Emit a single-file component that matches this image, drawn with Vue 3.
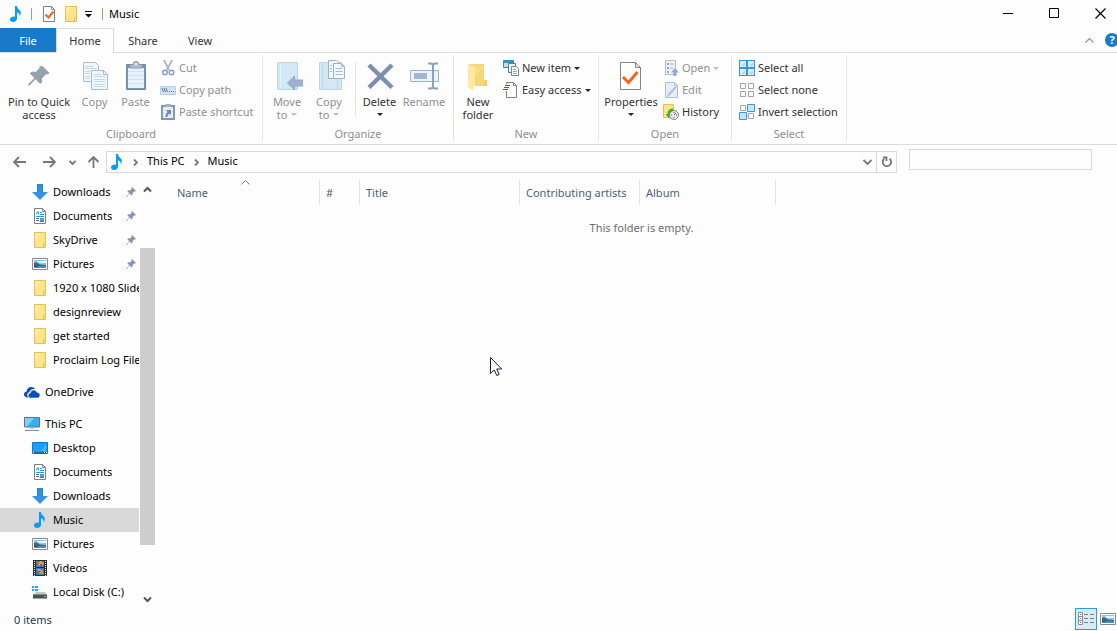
<script setup>
import { ref } from 'vue'

const tabs = ['Home', 'Share', 'View']
const activeTab = ref('Home')
const search = ref('')
const selected = ref('pc-Music')
const view = ref('details')

const groups = [
  {
    name: 'Clipboard',
    kind: 'clipboard',
    large: [
      { lines: ['Pin to Quick', 'access'], icon: 'pin-large', size: 'w70' },
      { lines: ['Copy'], icon: 'copy', size: 'w41', off: true },
      { lines: ['Paste'], icon: 'paste', size: 'w41', off: true },
    ],
    small: [
      { label: 'Cut', icon: 'cut', off: true },
      { label: 'Copy path', icon: 'copy-path', off: true },
      { label: 'Paste shortcut', icon: 'paste-shortcut', off: true },
    ],
  },
  {
    name: 'Organize',
    kind: 'organize',
    large: [
      { lines: ['Move', 'to'], icon: 'move', size: 'w42', off: true, menu: true },
      { lines: ['Copy', 'to'], icon: 'copy-to', size: 'w42', off: true, menu: true },
      { lines: ['Delete', ''], icon: 'delete', size: 'w41', menu: true, divided: true },
      { lines: ['Rename'], icon: 'rename', size: 'w48', off: true },
    ],
    small: [],
  },
  {
    name: 'New',
    kind: 'new',
    large: [{ lines: ['New', 'folder'], icon: 'new-folder', size: 'w44' }],
    small: [
      { label: 'New item', icon: 'new-item', menu: true },
      { label: 'Easy access', icon: 'easy-access', menu: true },
    ],
  },
  {
    name: 'Open',
    kind: 'open',
    large: [{ lines: ['Properties', ''], icon: 'properties', size: 'w56', menu: true }],
    small: [
      { label: 'Open', icon: 'open', off: true, menu: true },
      { label: 'Edit', icon: 'edit', off: true },
      { label: 'History', icon: 'history' },
    ],
  },
  {
    name: 'Select',
    kind: 'select',
    large: [],
    small: [
      { label: 'Select all', icon: 'select-all' },
      { label: 'Select none', icon: 'select-none' },
      { label: 'Invert selection', icon: 'invert' },
    ],
  },
]

const tree = [
  [
    { id: 'q-Downloads', label: 'Downloads', icon: 'downloads', pinned: true },
    { id: 'q-Documents', label: 'Documents', icon: 'documents', pinned: true },
    { id: 'q-SkyDrive', label: 'SkyDrive', icon: 'folder', pinned: true },
    { id: 'q-Pictures', label: 'Pictures', icon: 'pictures', pinned: true },
    { id: 'q-Slides', label: '1920 x 1080 Slides', icon: 'folder' },
    { id: 'q-design', label: 'designreview', icon: 'folder' },
    { id: 'q-get', label: 'get started', icon: 'folder' },
    { id: 'q-log', label: 'Proclaim Log Files', icon: 'folder' },
  ],
  [{ id: 'onedrive', label: 'OneDrive', icon: 'onedrive', root: true }],
  [
    { id: 'pc', label: 'This PC', icon: 'pc', root: true },
    { id: 'pc-Desktop', label: 'Desktop', icon: 'desktop' },
    { id: 'pc-Documents', label: 'Documents', icon: 'documents' },
    { id: 'pc-Downloads', label: 'Downloads', icon: 'downloads' },
    { id: 'pc-Music', label: 'Music', icon: 'music' },
    { id: 'pc-Pictures', label: 'Pictures', icon: 'pictures' },
    { id: 'pc-Videos', label: 'Videos', icon: 'videos' },
    { id: 'pc-C', label: 'Local Disk (C:)', icon: 'disk' },
  ],
]

const columns = [
  { label: 'Name', cls: 'c-name' },
  { label: '#', cls: 'c-num' },
  { label: 'Title', cls: 'c-title' },
  { label: 'Contributing artists', cls: 'c-artists' },
  { label: 'Album', cls: 'c-album' },
]
</script>

<template>
  <div class="window">
    <svg class="defs" aria-hidden="true">
      <symbol id="music" viewBox="0 0 16 16">
        <path d="M7 0h2c.2 2.200 1.200 3 2.600 4.200C13.300 5.700 13.200 8 11.700 10.500c.3-2.200-.5-3.600-2.700-4.300V12.500C9 14.500 7.300 16 5.200 16 3.500 16 2 15.200 2 13.500 2 11.700 3.800 10.500 5.600 10.500c.5 0 1 .1 1.400.3z" fill="#0a9bf5" />
      </symbol>
      <symbol id="folder" viewBox="0 0 16 16">
        <path d="M2.500.5h11v15h-11z" fill="#ffe48c" stroke="#e9c04a" />
        <path d="M3 1h6L3 9z" fill="#fff0b4" opacity=".7" />
        <path d="M11.500 15.500v-4l1-1h1v5z" fill="#ffe48c" stroke="#e9c04a" />
      </symbol>
      <symbol id="check-page" viewBox="0 0 16 16">
        <path d="M2.500.5h8l3 3v12h-11z" fill="#fff" stroke="#808080" />
        <path d="M10.500.5v3h3" fill="none" stroke="#909090" />
        <path d="M4.500 8.500l3 3 5-6" fill="none" stroke="#f4641e" stroke-width="2" />
      </symbol>
      <symbol id="documents" viewBox="0 0 16 16">
        <path d="M2.500.5h8l3 3v12h-11z" fill="#fff" stroke="#808080" />
        <path d="M10.500.5v3h3" fill="none" stroke="#808080" />
        <path d="M4 6.500l2-3 1 3M8 4.500h2M8 6.500h4M4 8.500h8" fill="none" stroke="#3292d4" />
        <path d="M4 10.500h3M4 12.500h3M8 13.500h4" stroke="#707070" />
        <path d="M8 10h4v3H8z" fill="#5a9cc8" />
      </symbol>
      <symbol id="downloads" viewBox="0 0 16 16">
        <path d="M5 0h6v8h5l-8 8-8-8h5z" fill="#3592e4" />
        <path d="M5.500 8V.5h5V8" fill="none" stroke="#2b80cd" />
      </symbol>
      <symbol id="pictures" viewBox="0 0 16 16">
        <path d="M.5 2.500h15v11H.5z" fill="#fff" stroke="#8a8a8a" />
        <path d="M2 4h12v8H2z" fill="#8fc4f0" />
        <path d="M5 5h9v2H7z" fill="#e7f6ff" />
        <path d="M2 7c2-1 4 0 6 1.500l6 .5v1H2z" fill="#3a6a6c" />
        <path d="M2 10h12v2H2z" fill="#4b8cc4" />
        <path d="M2 10h5l-3 1H2z" fill="#2c5a66" />
      </symbol>
      <symbol id="onedrive" viewBox="0 0 16 16">
        <path d="M5 13.500C1 13.500 0 12 0 10.300c0-1.700 1.100-2.700 2.600-2.900C3 4.300 5 3 7.200 3c1.800 0 3 .8 3.900 2.200-3-.7-5.200 1-5.800 3C2.700 8.500 2.700 12 5 13.500z" fill="#0d4db5" />
        <path d="M6.500 14C3.700 14 3.200 9.500 6.300 9c.3-2 1.800-3.100 3.300-3 1.600 0 2.700 1 3.300 2.300 2 0 3.100 1.300 3.100 2.900S14.900 14 13.300 14z" fill="#0d4db5" stroke="#fff" stroke-width=".6" />
      </symbol>
      <symbol id="pc" viewBox="0 0 16 16">
        <path d="M.5 1.500h15v9.500H.5z" fill="#37adf2" stroke="#55758e" />
        <path d="M1 2h9L3 10.500H1z" fill="#7ed0fb" />
        <path d="M6 12h4v1H6z" fill="#b6c5d0" />
        <path d="M1 14h14v1H1z" fill="#76909f" />
      </symbol>
      <symbol id="desktop" viewBox="0 0 16 16">
        <path d="M.5 2.500h15v11H.5z" fill="#18a0fb" stroke="#1577c2" />
        <path d="M1 12h14v1.500H1z" fill="#14619e" />
        <path d="M1 12h1v1H1zM12 12h1v1h-1zM14 12h1v1h-1z" fill="#fff" />
        <path d="M9 11L14 4v7z" fill="#46b5ff" />
      </symbol>
      <symbol id="videos" viewBox="0 0 16 16">
        <path d="M1 0h14v16H1z" fill="#2b2b2b" />
        <path d="M2.500 1v15M13.500 1v15" stroke="#f4f4f4" stroke-dasharray="1 1" />
        <path d="M4 1h8v6H4z" fill="#3f78c8" />
        <path d="M4 8h8v7H4z" fill="#3f78c8" />
        <path d="M6 4l2-3 3 1 1 2-2 2H7z" fill="#e8a03a" />
        <path d="M5 9h3l3 2v3H8z" fill="#e8a03a" />
        <path d="M4 1h2v2H4zM9 13h3v2H9z" fill="#5f9b4c" />
        <path d="M8 4h2v2H8zM6 11h3v1H6z" fill="#c24a35" />
      </symbol>
      <symbol id="disk" viewBox="0 0 16 16">
        <path d="M0 2h2v2H0zM3 2h3v2H3zM0 5h2v2H0zM3 5h3v2H3z" fill="#0eb5e8" />
        <path d="M4 8h9l2 3H1z" fill="#c3c7c9" />
        <path d="M1 10.500h14v4H1z" fill="#4c5357" />
        <path d="M12 12h2v1h-2z" fill="#48e06f" />
      </symbol>
      <symbol id="pin" viewBox="0 0 10 10">
        <path d="M6 0l4 4-1 .6-.8-.2L6.500 6.100l.2 1.500-1 1-2-2L.5 10H0v-.5l3.300-3.200-2-2 1-1 1.600.2 1.700-1.700L5.400.9z" fill="#8595a6" />
      </symbol>
      <symbol id="pin-large" viewBox="0 0 32 32">
        <path d="M19.500 6l7 7-2 1.500-1.500-.3-4.200 4.200.5 3.600-2 2-4.800-4.800L6.500 25.500H5.200v-1.300l6.200-6.200-4.500-4.500 2-2 3.700.5 4-4-.3-1.500z" fill="#93a2ac" />
      </symbol>
      <symbol id="copy" viewBox="0 0 32 32">
        <g fill="#f1f7fd" stroke="#a9bbd3">
          <path d="M4.500 2.500h12l3 3v16h-15z" />
          <path d="M12.500 10.500h12l4 4v15h-16z" />
          <path d="M24.500 10.500v4h4" fill="none" />
        </g>
        <path d="M6 6.500h9M6 8.500h11M6 11.500h5M6 13.500h5M6 16.500h5M6 18.500h5M15 14.500h7M15 16.500h11M15 19.500h11M15 21.500h11M15 24.500h11M15 26.500h11" stroke="#c6d7e8" />
      </symbol>
      <symbol id="paste" viewBox="0 0 32 32">
        <path d="M6.500 4.500h19v25h-19z" fill="#7c93b6" stroke="#7188ad" />
        <path d="M8 8h16v20H8z" fill="#e7f3fc" />
        <path d="M8 11.500h16M8 15.500h16M8 19.500h16M8 23.500h16" stroke="#d1e2f0" />
        <path d="M10 8V4.500h3c0-4 6-4 6 0h3V8z" fill="#b5bec9" stroke="#8997aa" />
        <circle cx="16" cy="4" r="1" fill="#fff" />
      </symbol>
      <symbol id="cut" viewBox="0 0 16 16">
        <path d="M4 0l5 10M12 0L7 10" stroke="#a7b7ca" stroke-width="1.800" fill="none" />
        <circle cx="5" cy="12.500" r="2.300" fill="none" stroke="#899fbd" stroke-width="1.500" />
        <circle cx="11.500" cy="12.500" r="2.300" fill="none" stroke="#899fbd" stroke-width="1.500" />
      </symbol>
      <symbol id="copy-path" viewBox="0 0 16 16">
        <path d="M.5 4.500h15v8H.5z" fill="#d5e2f1" stroke="#bdcde1" />
        <path d="M2 6l1.500 4M4 6l1.500 4M6 6l1.500 4M9 9.500h1M11 9.500h1M13 9.500h1" stroke="#5f7797" fill="none" />
      </symbol>
      <symbol id="paste-shortcut" viewBox="0 0 16 16">
        <path d="M2 2h12v13H2z" fill="#e3edf8" stroke="#8297b8" stroke-width="2" />
        <path d="M5 0h6v3H5z" fill="#a5b1c1" />
        <path d="M6 6h5v5L9.500 9.500C8 10.500 7.500 11.500 7.500 13H5.500c0-2 .8-3.700 2-5z" fill="#7188ab" />
      </symbol>
      <symbol id="move" viewBox="0 0 32 32">
        <path d="M6.500 2.500h20v27h-20z" fill="#d2e8f5" stroke="#bed4e6" />
        <path d="M9.500 3v26" stroke="#e1f2fa" />
        <path d="M16.500 23l7-7v4H32v6h-8.500v4z" fill="#a0b3ce" stroke="#8fa5c4" />
      </symbol>
      <symbol id="copy-to" viewBox="0 0 32 32">
        <path d="M6.500 2.500h22v27h-22z" fill="#d2e8f5" stroke="#bed4e6" />
        <path d="M9.500 3v26M24.500 16v13" stroke="#c4d5ea" />
        <path d="M15.500.5h8l4 4v14h-12z" fill="#f4f9fd" stroke="#9db0cb" />
        <path d="M20.500 3.500h8l3 3v12h-11z" fill="#f4f9fd" stroke="#9db0cb" />
        <path d="M28.500 3.500v3h3M17 5.500h2M17 8.500h2M17 11.500h2M22.500 8.500h7M22.500 11.500h7M22.500 14.500h7" stroke="#a9bbd3" fill="none" />
      </symbol>
      <symbol id="delete" viewBox="0 0 32 32">
        <path d="M5 5l23 22.500M28 5L5 27.500" stroke="#7d8fb1" stroke-width="4.500" fill="none" />
      </symbol>
      <symbol id="rename" viewBox="0 0 32 32">
        <path d="M2.500 10.500h28v11h-28z" fill="#eaf4fc" stroke="#9eb2cf" />
        <path d="M6 13h13v6H6z" fill="#a5b7d0" />
        <path d="M20 3.500h3c1 0 2 1 2 2.500 0-1.500 1-2.500 2-2.500h3M25 6v20M20 28.500h3c1 0 2-1 2-2.500 0 1.500 1 2.500 2 2.500h3" stroke="#8aa1c1" stroke-width="2" fill="none" />
      </symbol>
      <symbol id="new-folder" viewBox="0 0 32 32">
        <path d="M7 4h15v22H11z" fill="#f6d67b" />
        <path d="M22 20h3v6h-3z" fill="#f5cd66" />
        <path d="M6 4l7 3v17l-2 7-5-4z" fill="#ffe9a0" />
        <path d="M13 7h9l-9 10z" fill="#fbdd86" />
      </symbol>
      <symbol id="new-item" viewBox="0 0 16 16">
        <path d="M.5.5h10v7H.5z" fill="#b9dff5" stroke="#3884b4" />
        <path d="M1 1h9v2H1z" fill="#438fba" />
        <path d="M5.500 3.500h7v9h-7z" fill="#e9f4fb" stroke="#5c7a8e" />
        <path d="M8.500 6.500h5l2 2v7h-7z" fill="#fff" stroke="#858585" />
        <path d="M10 9.500h3M10 11.500h4M10 13.500h4" stroke="#7fb1d5" />
      </symbol>
      <symbol id="easy-access" viewBox="0 0 16 16">
        <path d="M3.500 2V.500h7l3 3v12h-10V9" fill="#fff" stroke="#808080" />
        <path d="M10.500.5v3h3" stroke="#808080" fill="none" />
        <path d="M2 3.500h5M1 5.500h5M0 7.500h5" stroke="#216cab" />
      </symbol>
      <symbol id="properties" viewBox="0 0 32 32">
        <path d="M5.500 2.500h15l5 5v22h-20z" fill="#fff" stroke="#858585" />
        <path d="M20.500 2.500v5h5z" fill="#e6e6e6" stroke="#858585" />
        <path d="M8 17l5.500 5.500L22.500 12" fill="none" stroke="#f4641e" stroke-width="3" />
      </symbol>
      <symbol id="open" viewBox="0 0 16 16">
        <path d="M2.500.5h10v14h-10z" fill="#ecf2f9" stroke="#adbdd5" />
        <path d="M4 3h2v2H4zM4 7h2v2H4zM4 11h2v2H4z" fill="#91a7c6" />
        <path d="M7 4h4M7 8h3" stroke="#a7b9d1" />
        <path d="M8 12.500l4-4.500 4 4.500h-2.500V16h-3v-3.500z" fill="#94a9c6" />
      </symbol>
      <symbol id="edit" viewBox="0 0 16 16">
        <path d="M2.500.5h9l3 3v12h-12z" fill="#e4effa" stroke="#adbdd5" />
        <path d="M11.500.5v3h3" fill="none" stroke="#adbdd5" />
        <path d="M14 5L7 13l-3 2 1-3.500 7-7z" fill="#b0c1d8" />
      </symbol>
      <symbol id="history" viewBox="0 0 16 16">
        <path d="M.5.5h10v13H.5z" fill="#ffe48c" stroke="#e9c04a" />
        <circle cx="11" cy="11" r="4.500" fill="#e4e8eb" stroke="#7e8990" />
        <path d="M11 11l2-2M11 8v1M11 13v1M8 11h1M13 11h1" fill="none" stroke="#58636b" />
        <path d="M10 4.500C6 4.500 4.500 7 4.500 10H2.500l4 5V10c0-2 1.500-3 3.500-3z" fill="#39ae36" />
      </symbol>
      <symbol id="select-all" viewBox="0 0 16 16">
        <path d="M0 0h16v16H0z" fill="#3496dd" />
        <path d="M1 1h6v6H1zM9 1h6v6H9zM1 9h6v6H1zM9 9h6v6H9z" fill="#d9f0fc" />
        <path d="M6 2v4H2zM14 2v4h-4zM6 10v4H2zM14 10v4h-4z" fill="#a7d9f6" />
      </symbol>
      <symbol id="select-none" viewBox="0 0 16 16">
        <path d="M1.500 1.500h5v5h-5zM9.500 1.500h5v5h-5zM1.500 9.500h5v5h-5zM9.500 9.500h5v5h-5z" fill="#fff" stroke="#a4a4a4" />
      </symbol>
      <symbol id="invert" viewBox="0 0 16 16">
        <path d="M1.500 1.500h5v5h-5zM9.500 9.500h5v5h-5z" fill="#fff" stroke="#a4a4a4" />
        <path d="M8.500.5h7v7h-7zM.5 8.500h7v7h-7z" fill="#c3e6fa" stroke="#3496dd" />
      </symbol>
      <symbol id="list-view" viewBox="0 0 16 16">
        <path d="M.5 1.500h4v12h-4zM.5 5.500h4M.5 9.500h4" fill="#fff" stroke="#8c8c8c" />
        <path d="M2 3h1v1H2zM2 11h1v1H2z" fill="#555" />
        <path d="M2 7h1v1H2z" fill="#3b94d9" />
        <path d="M6 3.500h4M12 3.500h4M6 7.500h4M12 7.500h4M6 11.500h4M12 11.500h4" stroke="#7d7d7d" />
      </symbol>
    </svg>

    <header class="titlebar">
      <svg class="i16"><use href="#music" /></svg>
      <span class="rule"></span>
      <button class="quick" aria-label="Properties"><svg class="i16"><use href="#check-page" /></svg></button>
      <button class="quick" aria-label="New folder"><svg class="i16"><use href="#folder" /></svg></button>
      <button class="quick narrow" aria-label="Customize Quick Access Toolbar">
        <svg class="customize" viewBox="0 0 7 7"><path d="M0 0h7v1H0zM0 3h7L3.500 6.500z" fill="#111" /></svg>
      </button>
      <span class="rule"></span>
      <h1>Music</h1>
      <div class="controls">
        <button aria-label="Minimize"><svg viewBox="0 0 11 11"><path d="M0 5.500h10" stroke="#000" /></svg></button>
        <button aria-label="Maximize"><svg viewBox="0 0 11 11"><path d="M.5.5h9v9h-9z" stroke="#000" fill="none" /></svg></button>
        <button aria-label="Close"><svg viewBox="0 0 11 11"><path d="M.5.5l10 10M10.500.5l-10 10" stroke="#000" stroke-width="1.200" /></svg></button>
      </div>
    </header>

    <nav class="tabs" aria-label="Ribbon tabs">
      <button class="tab file">File</button>
      <button v-for="t in tabs" :key="t" class="tab" :class="{ active: t === activeTab }" @click="activeTab = t">{{ t }}</button>
      <span class="tabs-end">
        <button aria-label="Minimize the Ribbon">
          <svg class="collapse" viewBox="0 0 9 5"><path d="M.5 4.500l4-4 4 4" fill="none" stroke="#9a9a9a" stroke-width="1.300" /></svg>
        </button>
        <button class="help" aria-label="Help">?</button>
      </span>
    </nav>

    <section class="ribbon">
      <div v-for="g in groups" :key="g.name" class="group" :class="g.kind">
        <div class="tools">
          <button
            v-for="b in g.large"
            :key="b.icon"
            class="large"
            :class="[b.size, { off: b.off, divided: b.divided }]"
          >
            <svg class="i32"><use :href="'#' + b.icon" /></svg>
            <span v-for="(line, n) in b.lines" :key="n" class="line">
              {{ line }}<i v-if="b.menu && n === 1" class="caret" :class="{ spaced: line }"></i>
            </span>
          </button>
          <div v-if="g.small.length" class="stack">
            <button v-for="b in g.small" :key="b.label" class="small" :class="{ off: b.off }">
              <svg class="i16"><use :href="'#' + b.icon" /></svg>
              <span>{{ b.label }}</span>
              <i v-if="b.menu" class="caret"></i>
            </button>
          </div>
        </div>
        <div class="caption">{{ g.name }}</div>
      </div>
    </section>

    <section class="location">
      <div class="history">
        <button aria-label="Back"><svg class="arrow" viewBox="0 0 13 12"><path d="M6 1L1 6l5 5M1 6h12" /></svg></button>
        <button aria-label="Forward"><svg class="arrow" viewBox="0 0 13 12"><path d="M7 1l5 5-5 5M12 6H0" /></svg></button>
        <button class="recent" aria-label="Recent locations"><svg class="chev" viewBox="0 0 7 5"><path d="M.5 1l3 3 3-3" /></svg></button>
        <button class="up" aria-label="Up"><svg class="arrow" viewBox="0 0 13 12"><path d="M1.500 6l5-5 5 5M6.500 1v11" /></svg></button>
      </div>
      <div class="address">
        <svg class="i16"><use href="#music" /></svg>
        <svg class="sep" viewBox="0 0 5 7"><path d="M1 .5l3 3-3 3" /></svg>
        <a href="#">This PC</a>
        <svg class="sep" viewBox="0 0 5 7"><path d="M1 .5l3 3-3 3" /></svg>
        <a href="#">Music</a>
        <button class="drop" aria-label="Previous locations"><svg viewBox="0 0 9 6"><path d="M.5 1l4 4 4-4" /></svg></button>
        <button class="refresh" aria-label="Refresh">
          <svg viewBox="0 0 12 12"><path d="M8.500 2.700A4.200 4.200 0 1 1 3 3M2 1.500h3.500V5" /></svg>
        </button>
      </div>
      <input v-model="search" class="search" type="search" aria-label="Search Music" />
    </section>

    <main class="body">
      <nav class="tree" aria-label="Folders">
        <ul v-for="(section, s) in tree" :key="s">
          <li v-for="item in section" :key="item.id">
            <a href="#" :class="{ root: item.root, selected: item.id === selected }" @click.prevent="selected = item.id">
              <svg class="i16"><use :href="'#' + item.icon" /></svg>
              <span>{{ item.label }}</span>
              <svg v-if="item.pinned" class="pin"><use href="#pin" /></svg>
            </a>
          </li>
        </ul>
      </nav>
      <div class="scroll">
        <svg class="scroll-arrow" viewBox="0 0 9 7"><path d="M1 5.500l3.500-3.500L8 5.500" /></svg>
        <div class="track"><div class="thumb"></div></div>
        <svg class="scroll-arrow" viewBox="0 0 9 7"><path d="M1 1.500L4.500 5 8 1.500" /></svg>
      </div>
      <section class="files">
        <table>
          <thead>
            <tr>
              <th v-for="(c, n) in columns" :key="c.label" :class="c.cls" scope="col">
                {{ c.label }}
                <svg v-if="n === 0" class="sort" viewBox="0 0 9 5"><path d="M.5 4.500l4-4 4 4" /></svg>
              </th>
            </tr>
          </thead>
        </table>
        <p class="empty">This folder is empty.</p>
      </section>
    </main>

    <footer class="status">
      <span class="count">0 items</span>
      <div class="views">
        <button :class="{ on: view === 'details' }" aria-label="Details view" @click="view = 'details'">
          <svg class="i16"><use href="#list-view" /></svg>
        </button>
        <button :class="{ on: view === 'icons' }" aria-label="Large icons view" @click="view = 'icons'">
          <svg class="i16"><use href="#pictures" /></svg>
        </button>
      </div>
    </footer>

    <svg class="pointer" viewBox="0 0 12 20" aria-hidden="true">
      <path d="M.5.500v16l3.700-3.500 2.600 5.500 2.400-1-2.500-5.500h5z" fill="#fff" stroke="#1c1c3c" />
    </svg>
  </div>
</template>

<style>
body {
  margin: 0;
  background: #fdfdfd;
}
</style>

<style scoped>
.window {
  position: relative;
  display: flex;
  flex-direction: column;
  min-height: 100vh;
  overflow: hidden;
  background: #fdfdfd;
  color: #000;
  font: 11px/16px 'Noto Sans', 'Open Sans', sans-serif;
}
.defs {
  position: absolute;
  width: 0;
  height: 0;
}
svg {
  display: block;
  flex: none;
}
button {
  display: flex;
  align-items: center;
  justify-content: center;
  margin: 0;
  padding: 0;
  border: 0;
  background: none;
  color: inherit;
  font: inherit;
}
a {
  color: inherit;
  text-decoration: none;
}
.i16 {
  width: 16px;
  height: 16px;
}
.i32 {
  width: 32px;
  height: 32px;
}
.titlebar {
  display: flex;
  align-items: center;
  height: 28px;
  padding-left: 8px;
}
.rule {
  width: 1px;
  height: 12px;
  margin: 0 6px 0 7px;
  background: #9a9a9a;
}
.quick {
  width: 22px;
}
.quick.narrow {
  width: 13px;
}
.customize {
  width: 7px;
  height: 7px;
}
h1 {
  margin: 0;
  font-size: 11px;
  font-weight: 400;
}
.controls {
  display: flex;
  align-self: flex-start;
  margin-left: auto;
  margin-right: -6px;
}
.controls button {
  width: 46px;
  height: 26px;
}
.controls svg {
  width: 11px;
  height: 11px;
}
.tabs {
  display: flex;
  height: 24px;
  border-bottom: 1px solid #dadbdc;
}
.tab {
  box-sizing: border-box;
  width: 56px;
  padding: 2px 0 0;
  color: #333;
}
.tab.file {
  height: 24px;
  background: #1979ca;
  color: #fff;
}
.tab.active {
  height: 25px;
  width: 58px;
  padding: 0;
  border: 1px solid #dadbdc;
  border-bottom: 0;
  background: #fdfdfd;
}
.tab.active + .tab {
  width: 58px;
}
.tabs-end {
  display: flex;
  align-items: center;
  gap: 11px;
  margin-left: auto;
  margin-right: -2px;
}
.collapse {
  width: 9px;
  height: 5px;
}
.help {
  width: 14px;
  height: 14px;
  border-radius: 50%;
  background: #1979ca;
  color: #fff;
  font-size: 11px;
  font-weight: 700;
}
.ribbon {
  display: flex;
  padding: 2px 0 3px;
  border-bottom: 1px solid #dadbdc;
}
.group {
  display: flex;
  flex-direction: column;
  box-sizing: border-box;
  height: 86px;
  border-right: 1px solid #e2e3e4;
  color: #333;
}
.clipboard {
  width: 263px;
}
.organize {
  width: 191px;
}
.new {
  width: 145px;
}
.open {
  width: 133px;
}
.select {
  width: 115px;
}
.tools {
  display: flex;
  height: 73px;
  padding-left: 3px;
}
.clipboard .tools,
.open .tools {
  padding-left: 4px;
}
.new .tools {
  padding-left: 2px;
}
.large {
  flex-direction: column;
  justify-content: flex-start;
  position: relative;
  padding-top: 5px;
}
.large .i32 {
  margin-bottom: 3px;
}
.line {
  display: flex;
  align-items: center;
  height: 13px;
  line-height: 13px;
  white-space: nowrap;
}
.w70 { width: 70px; }
.w56 { width: 56px; }
.w48 { width: 48px; }
.w44 { width: 44px; }
.w42 { width: 42px; }
.w41 { width: 41px; }
.divided {
  margin-left: 9px;
}
.divided::before {
  content: '';
  position: absolute;
  left: -4px;
  top: 7px;
  width: 1px;
  height: 54px;
  background: #e2e3e4;
}
.off {
  color: #8f8f8f;
}
.caret {
  width: 0;
  height: 0;
  border: 3px solid transparent;
  border-top-color: #222;
  border-bottom-width: 0;
}
.caret.spaced {
  margin-left: 4px;
}
.off .caret {
  border-top-color: #b0bfd4;
}
.stack {
  display: flex;
  flex-direction: column;
  margin-left: 4px;
  padding-top: 2px;
}
.new .stack {
  margin-left: 3px;
}
.small {
  justify-content: flex-start;
  gap: 3px;
  height: 22px;
  white-space: nowrap;
}
.caption {
  padding-top: 1px;
  line-height: 14px;
  text-align: center;
  color: #8f8f8f;
}
.location {
  display: flex;
  align-items: flex-start;
  height: 31px;
  padding: 4px 25px 0 0;
}
.history {
  display: flex;
  align-items: center;
  width: 106px;
  height: 26px;
  padding-left: 4px;
  box-sizing: border-box;
}
.history button {
  width: 30px;
}
.history .recent {
  width: 17px;
}
.history .up {
  width: 24px;
}
.location path {
  fill: none;
  stroke: #777;
  stroke-width: 1.8;
}
.location .i16 {
  margin-left: 2px;
}
.arrow {
  width: 13px;
  height: 12px;
}
.chev {
  width: 7px;
  height: 5px;
}
.address {
  display: flex;
  flex: 1;
  align-items: center;
  box-sizing: border-box;
  height: 22px;
  margin-top: 2px;
  border: 1px solid #d9d9d9;
}
.address a {
  padding-bottom: 2px;
}
.sep {
  width: 5px;
  height: 7px;
  margin: 0 9px 0 8px;
}
a + .sep {
  margin-left: 9px;
}
.drop {
  width: 18px;
  margin-left: auto;
}
.drop svg {
  width: 9px;
  height: 6px;
}
.refresh {
  width: 20px;
  height: 20px;
  border-left: 1px solid #d9d9d9;
}
.refresh svg {
  width: 12px;
  height: 12px;
}
.search {
  box-sizing: border-box;
  width: 183px;
  height: 21px;
  margin: 0 0 0 12px;
  padding: 0 6px;
  border: 1px solid #d9d9d9;
  border-radius: 0;
  background: #fdfdfd;
  font: inherit;
  appearance: none;
}
.body {
  display: flex;
  flex: 1;
}
.tree {
  width: 140px;
  overflow: hidden;
}
.tree ul {
  margin: 0;
  padding: 0;
  list-style: none;
}
.tree ul + ul {
  margin-top: 8px;
}
.tree a {
  display: flex;
  align-items: center;
  gap: 5px;
  height: 24px;
  margin-right: 1px;
  padding-left: 32px;
  overflow: hidden;
  white-space: nowrap;
}
.tree a.root {
  padding-left: 24px;
}
.tree a.selected {
  background: #d9d9d9;
}
.pin {
  width: 10px;
  height: 10px;
  margin-left: auto;
  margin-right: 3px;
}
.scroll {
  display: flex;
  flex-direction: column;
  align-items: center;
  width: 15px;
  padding: 6px 0 4px;
}
.scroll-arrow {
  width: 9px;
  height: 7px;
}
.scroll-arrow path {
  fill: none;
  stroke: #555;
  stroke-width: 2;
}
.track {
  flex: 1;
  align-self: stretch;
  display: flex;
  flex-direction: column;
  padding: 55px 0 51px;
}
.thumb {
  flex: 1;
  background: #cdcdcd;
}
.files {
  flex: 1;
  min-width: 0;
  padding: 0 4px 0 15px;
}
table {
  table-layout: fixed;
  width: 606px;
  border-collapse: separate;
  border-spacing: 0;
}
th {
  position: relative;
  box-sizing: border-box;
  height: 25px;
  padding: 0 0 0 6px;
  border-right: 1px solid #e2e3e4;
  color: #4c607a;
  font-weight: 400;
  text-align: left;
  white-space: nowrap;
}
.c-name {
  width: 150px;
  padding-left: 7px;
}
.c-num {
  width: 40px;
}
.c-title {
  width: 160px;
}
.c-artists {
  width: 120px;
}
.c-album {
  width: 136px;
}
.sort {
  position: absolute;
  top: 0;
  left: 71px;
  width: 9px;
  height: 5px;
}
.sort path {
  fill: none;
  stroke: #777;
}
.empty {
  margin: 15px 0 0;
  text-align: center;
  color: #6d6d6d;
}
.status {
  display: flex;
  align-items: center;
  height: 24px;
  padding: 0 0 0 14px;
  color: #1e395b;
}
.count {
  padding-top: 2px;
}
.views {
  display: flex;
  margin-left: auto;
  margin-right: -2px;
}
.views button {
  box-sizing: border-box;
  width: 22px;
  height: 22px;
  border: 1px solid transparent;
}
.views button.on {
  border-color: #26a0da;
  background: #d5ebf7;
}
.pointer {
  position: absolute;
  left: 490px;
  top: 357px;
  width: 12px;
  height: 20px;
}
</style>
